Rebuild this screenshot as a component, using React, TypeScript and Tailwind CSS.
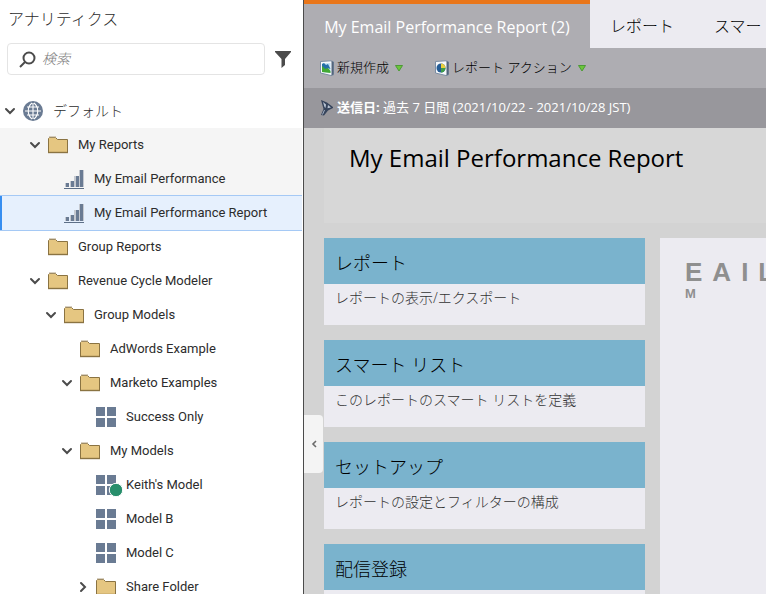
import React from "react";

const side = "font-['Roboto','Noto_Sans_CJK_JP',sans-serif]";
const web = "font-['Open_Sans','Noto_Sans_CJK_JP',sans-serif]";

function Chevron({ open }: { open: boolean }) {
  return (
    <svg width="12" height="12" viewBox="0 0 12 12" fill="none" stroke="#4b4b4b" strokeWidth="2" strokeLinecap="round" aria-hidden="true">
      <path d={open ? "M2 4l4 4 4-4" : "M4 2l4 4-4 4"} />
    </svg>
  );
}

function Folder() {
  return (
    <svg width="20" height="18" viewBox="0 0 20 18" aria-hidden="true">
      <path d="M.5 16.5V2.5L1.5 1.5h6l2 2h10v13z" fill="#e5c681" stroke="#8a7342" />
      <path d="M1 1h7" stroke="#b3a384" />
      <path d="M0 16.5h20" stroke="#8a7342" strokeWidth="1.4" />
    </svg>
  );
}

function Bars() {
  return (
    <svg width="20" height="20" viewBox="0 0 20 20" aria-hidden="true">
      <path d="M0 19.5h20" stroke="#5d6f87" />
      <path d="M1 14h1v4H1zM6 12h1v6H6zM10 7h2v11h-2zM15 1h1v17h-1zM19 1h1v17h-1z" fill="#c5c9d0" />
      <path d="M2 14h3v4H2zM7 12h3v6H7zM12 7h3v11h-3zM16 1h3v17h-3z" fill="#6a7b93" />
    </svg>
  );
}

function Model({ live }: { live?: boolean }) {
  return (
    <svg width="20" height="20" viewBox="0 0 20 20" overflow="visible" aria-hidden="true">
      <path d="M0 0h9v9H0zM11 0h9v9h-9zM0 11h9v9H0zM11 11h9v9h-9z" fill="#6a7b93" />
      {live && <circle cx="20" cy="15" r="6.7" fill="#278e6b" stroke="#fff" strokeWidth="1" />}
    </svg>
  );
}

type Row = { label: string; indent: string; kind: "folder" | "report" | "model" | "live"; open?: boolean; state?: "hover" | "selected" };

const rows: Row[] = [
  { label: "My Reports", indent: "pl-7", kind: "folder", open: true, state: "hover" },
  { label: "My Email Performance", indent: "pl-11", kind: "report", state: "hover" },
  { label: "My Email Performance Report", indent: "pl-11", kind: "report", state: "selected" },
  { label: "Group Reports", indent: "pl-7", kind: "folder" },
  { label: "Revenue Cycle Modeler", indent: "pl-7", kind: "folder", open: true },
  { label: "Group Models", indent: "pl-11", kind: "folder", open: true },
  { label: "AdWords Example", indent: "pl-15", kind: "folder" },
  { label: "Marketo Examples", indent: "pl-15", kind: "folder", open: true },
  { label: "Success Only", indent: "pl-19", kind: "model" },
  { label: "My Models", indent: "pl-15", kind: "folder", open: true },
  { label: "Keith's Model", indent: "pl-19", kind: "live" },
  { label: "Model B", indent: "pl-19", kind: "model" },
  { label: "Model C", indent: "pl-19", kind: "model" },
  { label: "Share Folder", indent: "pl-19", kind: "folder", open: false },
];

function TreeRow({ row }: { row: Row }) {
  const tone =
    row.state === "selected"
      ? "relative bg-[#e6f0fd] shadow-[inset_2px_0_#378ef0,0_-1px_#a5c9f5,0_1px_#a5c9f5]"
      : row.state === "hover"
        ? "bg-[#f5f5f5]"
        : "";
  return (
    <li>
      <button type="button" className={`flex h-[34px] w-full items-center text-left text-[13px] whitespace-nowrap ${row.indent} ${tone}`}>
        <span className="flex w-5 shrink-0 items-center pl-px">{row.open !== undefined && <Chevron open={row.open} />}</span>
        {row.kind === "folder" ? <Folder /> : row.kind === "report" ? <Bars /> : <Model live={row.kind === "live"} />}
        <span className="pl-2.5">{row.label}</span>
      </button>
    </li>
  );
}

function Caret() {
  return (
    <svg width="8" height="8" viewBox="0 0 8 8" aria-hidden="true">
      <path d="M.5 1.5h7L4 7z" fill="#6cc63c" stroke="#4c9a35" />
    </svg>
  );
}

function NewIcon() {
  return (
    <svg width="14" height="16" viewBox="0 0 14 16" aria-hidden="true">
      <path d="M.5 1.5 11 .8l2.500 1v13l-2.500.7L.5 13z" fill="#f6f8fb" stroke="#7b8da3" />
      <path d="M11.500 1v14.500l2-1V2z" fill="#53657c" />
      <path d="M2 3.500l8.500-.5v10L2 12z" fill="#bfe0f5" />
      <path d="M2 5l3 2 3 1 2.500 3v2L2 12z" fill="#42a934" />
      <path d="M2 4l2-1 2 2 2-1 2.500 5-3-1-2 1-3.500-3z" fill="#246fa8" />
    </svg>
  );
}

function ActionIcon() {
  return (
    <svg width="14" height="16" viewBox="0 0 14 16" aria-hidden="true">
      <path d="M.5 1.500 11 .8l2.500 1v13l-2.500.7L.5 13z" fill="#f6f8fb" stroke="#7b8da3" />
      <path d="M11.500 1v14.500l2-1V2z" fill="#53657c" />
      <circle cx="6" cy="8" r="4.500" fill="#245c96" />
      <path d="M6 8V3.500A4.500 4.500 0 0 1 10.500 8z" fill="#e8cf3c" />
      <path d="M6 8h4.500A4.500 4.500 0 0 1 6 12.500z" fill="#3f9d49" />
    </svg>
  );
}

const cards = [
  { title: "レポート", text: "レポートの表示/エクスポート" },
  { title: "スマート リスト", text: "このレポートのスマート リストを定義" },
  { title: "セットアップ", text: "レポートの設定とフィルターの構成" },
  { title: "配信登録", text: "" },
];

export default function App() {
  return (
    <div className={`flex h-screen overflow-hidden bg-[#d3d3d3] ${web}`}>
      <aside className={`flex w-[304px] shrink-0 flex-col border-r border-[#4b4b4b] bg-white pr-px text-sm text-[#2c2c2c] ${side}`}>
        <h1 className="px-2 pt-2 text-base leading-6 font-extralight">アナリティクス</h1>
        <div className="flex items-center gap-2.5 px-[7px] pt-[11px]">
          <label className="flex h-8 w-[258px] items-center gap-1.5 rounded-sm border border-[#e4e4e4] pl-[11px]">
            <svg width="17" height="17" viewBox="0 0 17 17" fill="none" stroke="#4b4b4b" strokeWidth="2" aria-hidden="true">
              <circle cx="10" cy="7" r="5.5" />
              <path d="M6 11l-5 5" />
            </svg>
            <input type="text" aria-label="検索" placeholder="検索" className="min-w-0 flex-1 bg-transparent font-extralight italic outline-none placeholder:text-[#7a7a7a]" />
          </label>
          <button type="button" aria-label="フィルター">
            <svg width="16" height="17" viewBox="0 0 16 17" aria-hidden="true">
              <path d="M0 0h16v1l-6 7v6l-3.500 3V8L0 1z" fill="#4b4b4b" />
            </svg>
          </button>
        </div>
        <ul className="pt-[19px]">
          <li>
            <button type="button" className="flex h-[34px] w-full items-center pl-1 text-left font-extralight">
              <Chevron open />
              <svg className="ml-[7px]" width="20" height="20" viewBox="0 0 20 20" fill="none" aria-hidden="true">
                <circle cx="10" cy="10" r="10" fill="#6a7b93" />
                <path d="M10 2v16M2 10h16M4 6h12M4 14h12M9 2c-5 4-5 12 0 16M11 2c5 4 5 12 0 16" stroke="#fff" strokeWidth="1.1" />
              </svg>
              <span className="pl-2.5">デフォルト</span>
            </button>
          </li>
          {rows.map((row) => (
            <TreeRow key={row.label} row={row} />
          ))}
        </ul>
      </aside>

      <main className="relative flex min-w-0 flex-1 flex-col">
        <nav className="flex h-12 shrink-0 overflow-hidden bg-[#ecebf1] text-base whitespace-nowrap">
          <button type="button" className="w-[286px] shrink-0 border-t-4 border-[#e9761a] bg-[#aeadb2] pt-0.5 text-white">
            My Email Performance Report (2)
          </button>
          <button type="button" className="shrink-0 px-5 pt-1 font-extralight">レポート</button>
          <button type="button" className="shrink-0 px-5 pt-1 font-extralight">スマート リスト</button>
        </nav>
        <div className="flex h-10 shrink-0 items-center gap-8 bg-[#aeadb2] pl-4 text-[13px] font-extralight whitespace-nowrap">
          <button type="button" className="flex items-center gap-[3px]">
            <NewIcon />新規作成
            <span className="pl-[3px]"><Caret /></span>
          </button>
          <button type="button" className="flex items-center gap-[3px]">
            <ActionIcon />レポート アクション
            <span className="pl-[3px]"><Caret /></span>
          </button>
        </div>
        <div className="flex h-10 shrink-0 items-center gap-[3px] bg-[#98979c] pl-4 text-[13px] whitespace-nowrap text-white">
          <svg width="14" height="16" viewBox="0 0 14 16" aria-hidden="true">
            <path d="M1 0 7 2.500l6 4.500v1L8 10.500 4 15.500 1 15l2.500-6z" fill="#36445c" />
            <path d="M3 2 6 4.500 5.500 8 4.500 7zM8 5l3 2.500-3.500.8z" fill="#b9c4d4" />
            <path d="M4.500 10 2.500 14.500" stroke="#a9b6c8" />
          </svg>
          <p><b>送信日:</b> 過去 7 日間 (2021/10/22 - 2021/10/28 JST)</p>
        </div>
        <div className="flex min-h-0 flex-1 flex-col overflow-hidden pl-5">
          <header className="h-[95px] shrink-0 bg-[#d7d7d7] px-[25px] pt-3">
            <h2 className="text-2xl leading-9">My Email Performance Report</h2>
          </header>
          <div className="flex min-h-0 flex-1 gap-[15px] pt-[15px]">
            <div className="flex w-[321px] shrink-0 flex-col gap-[15px]">
              {cards.map((card) => (
                <section key={card.title} className="shrink-0 bg-[#ecebf1] font-extralight">
                  <h3 className="h-[46px] bg-[#7ab3cd] px-[11px] pt-[13px] text-lg leading-6">{card.title}</h3>
                  <p className="h-[41px] px-[11px] pt-1 text-sm leading-5 text-[#333]">{card.text}</p>
                </section>
              ))}
            </div>
            <section className="flex-1 overflow-hidden bg-[#ecebf1] px-[25px] pt-5 font-['Liberation_Sans',sans-serif] font-bold text-[#8f8f8f]">
              <p className="flex gap-2.5 text-[26px] leading-7"><span>E</span><span>A</span><span>I</span><span>L</span></p>
              <p className="text-[13px] leading-4">M</p>
            </section>
          </div>
        </div>
        <button type="button" aria-label="パネルを折りたたむ" className="absolute top-[415px] left-0 flex h-[58px] w-[19px] items-center justify-center rounded-r-sm bg-[#f4f4f4]">
          <svg width="6" height="8" viewBox="0 0 6 8" fill="none" stroke="#6b6b6b" strokeWidth="1.6" aria-hidden="true">
            <path d="M5 1L2 4l3 3" />
          </svg>
        </button>
      </main>
    </div>
  );
}
